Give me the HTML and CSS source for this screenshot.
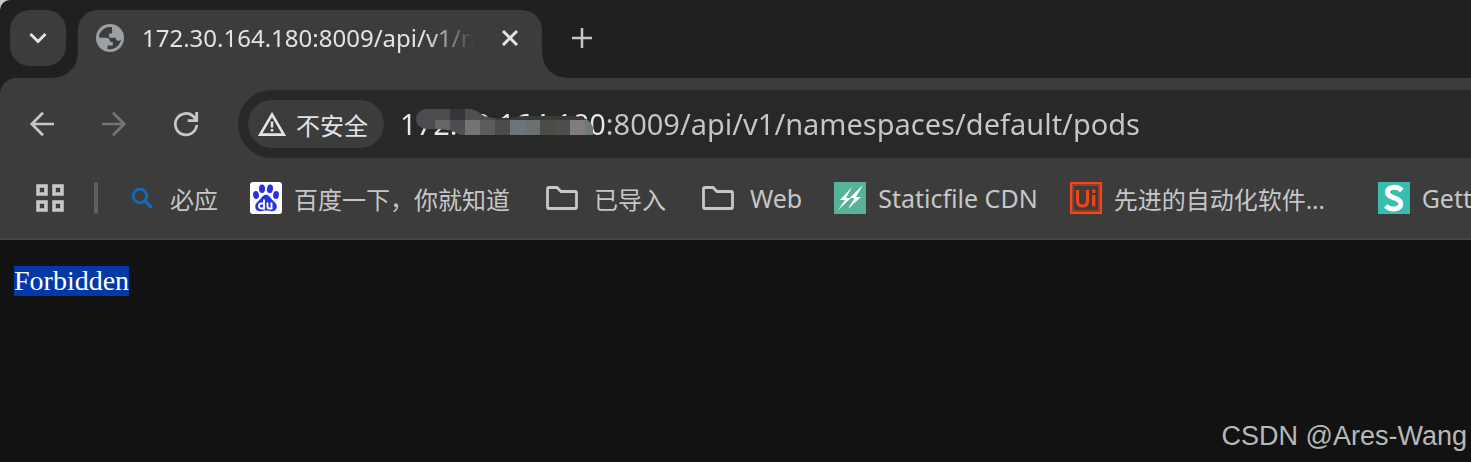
FILE: index.html
```html
<!DOCTYPE html>
<html lang="zh-CN">
<head>
    <title>172.30.164.180:8009/api/v1/namespaces/default/pods</title>
    <meta charset="UTF-8">
    <link rel="stylesheet" href="styles.css">
</head>

<body>

<div class="window">
    <div class="tab-strip">
        <button class="tab-search" type="button" aria-label="搜索标签页">
            <svg width="20" height="14" viewBox="0 0 20 14"><path d="M2.5 3l7.500 7.500L17.500 3" fill="none" stroke="#e3e3e3" stroke-width="3"/></svg>
        </button>
        <div class="tab">
            <svg class="globe" width="28" height="28" viewBox="0 0 28 28">
                <circle cx="14" cy="14" r="14" fill="#9aa0a6"/>
                <path d="M16 3.200C9 2 3 7.500 3 13.500l7 .2c2.500 0 4 1.500 4 4l2.800.2v3.600h-5.300V25c7 1.500 13-4 13.500-9.500-.6 1-1.500 1.300-2.500 1.300-2 0-2.800-1-2.800-3h-6.600V9.500h3V6.200z" fill="#3c3c3c"/>
            </svg>
            <span class="tab-title">172.30.164.180:8009/api/v1/n</span>
            <button class="tab-close" type="button" aria-label="关闭">
                <svg width="18" height="18" viewBox="0 0 18 18"><path d="M2 2l14 14M16 2L2 16" stroke="#e3e3e3" stroke-width="3"/></svg>
            </button>
        </div>
        <button class="new-tab" type="button" aria-label="新标签页">
            <svg width="20" height="20" viewBox="0 0 20 20"><path d="M10 0v20M0 10h20" stroke="#c7c7c7" stroke-width="2.500"/></svg>
        </button>
    </div>

    <div class="toolbar">
        <button class="nav-button" type="button" aria-label="后退">
            <svg width="26" height="26" viewBox="0 0 26 26"><path d="M25 13H3M14 1.800L2.800 13 14 24.200" fill="none" stroke="#c7c7c7" stroke-width="2.700"/></svg>
        </button>
        <button class="nav-button" type="button" aria-label="前进" disabled>
            <svg width="26" height="26" viewBox="0 0 26 26"><path d="M1 13h22M12 1.800L23.200 13 12 24.200" fill="none" stroke="#757575" stroke-width="2.700"/></svg>
        </button>
        <button class="nav-button" type="button" aria-label="重新加载">
            <svg width="26" height="26" viewBox="0 0 26 26"><path d="M23.700 14A10.700 10.700 0 1 1 20.500 5.500L23.500 8.700M23.700 1v8.700h-9" fill="none" stroke="#c7c7c7" stroke-width="2.800"/></svg>
        </button>
        <div class="address-bar">
            <button class="security-chip" type="button">
                <svg width="28" height="24" viewBox="0 0 28 24"><path d="M14 2.500L25.800 22.600H2.200z" fill="none" stroke="#e3e3e3" stroke-width="2.600"/><path d="M14 9.500v6M14 17v2.600" stroke="#e3e3e3" stroke-width="2.500"/></svg>
                <span>不安全</span>
            </button>
            <div class="url-box">
                <input class="url" type="text" aria-label="地址" value="172.30.164.180:8009/api/v1/namespaces/default/pods" spellcheck="false">
                <!-- 遮住 IP 的马赛克 -->
                <svg class="mosaic" width="178" height="28" viewBox="416 108 178 28">
                    <clipPath id="smear"><path d="M426 109H470Q477 110 481 114Q486 118 496 118H511Q516 116 528 116H575Q591 118 593 128V135H461Q451 129 438 129H426Q416 127 416 119Q417 110 426 109z"/></clipPath>
                    <g clip-path="url(#smear)" shape-rendering="crispEdges">
                        <path fill="#4b4c4e" d="M416 108h34v12h-34z"/>
                        <path fill="#353638" d="M450 108h15v12h-15z"/>
                        <path fill="#4e4f4f" d="M465 108h30v12h-30z"/>
                        <path fill="#393939" d="M495 108h99v12h-99z"/>
                        <path fill="#4c4d51" d="M416 120h19v15h-19z"/>
                        <path fill="#686664" d="M435 120h15v15h-15z"/>
                        <path fill="#4c4e53" d="M450 120h15v15h-15z"/>
                        <path fill="#747473" d="M465 120h15v15h-15z"/>
                        <path fill="#5b5d5d" d="M480 120h15v15h-15z"/>
                        <path fill="#4e4a4b" d="M495 120h15v15h-15z"/>
                        <path fill="#6d7579" d="M510 120h15v15h-15z"/>
                        <path fill="#6a7172" d="M525 120h15v15h-15z"/>
                        <path fill="#4e4b44" d="M540 120h15v15h-15z"/>
                        <path fill="#4e4c50" d="M555 120h15v15h-15z"/>
                        <path fill="#827b79" d="M570 120h15v15h-15z"/>
                        <path fill="#707679" d="M585 120h9v15h-9z"/>
                    </g>
                </svg>
            </div>
        </div>
    </div>

    <nav class="bookmarks">
        <button class="apps" type="button" aria-label="应用">
            <svg width="28" height="28" viewBox="0 0 28 28"><path d="M2 2h8v8H2zM18 2h8v8h-8zM2 18h8v8H2zM18 18h8v8h-8z" fill="none" stroke="#c7c7c7" stroke-width="3.600"/></svg>
        </button>
        <span class="divider"></span>
        <a class="bookmark" href="#">
            <svg width="32" height="32" viewBox="0 0 32 32"><circle cx="14" cy="14" r="6.800" fill="none" stroke="#0f6cbd" stroke-width="2.800"/><path d="M18.800 18.800l6 6" stroke="#0f6cbd" stroke-width="3.200" stroke-linecap="round"/></svg>
            <span>必应</span>
        </a>
        <a class="bookmark" href="#">
            <svg width="32" height="32" viewBox="0 0 32 32">
                <rect width="32" height="32" rx="3" fill="#fff"/>
                <g fill="#2932e1">
                    <ellipse cx="12" cy="6.800" rx="3" ry="4.300"/>
                    <ellipse cx="20" cy="6.800" rx="3" ry="4.300" transform="rotate(8 20 6.800)"/>
                    <ellipse cx="6" cy="13" rx="2.900" ry="4" transform="rotate(-10 6 13)"/>
                    <ellipse cx="26" cy="13" rx="2.900" ry="4" transform="rotate(8 26 13)"/>
                    <path d="M16 12.800c3 0 4 2.600 6 4.700 2.400 2.400 4.800 4 4.800 7 0 3-2 4.700-5 4.700-2 0-3.500-.6-5.800-.6s-3.800.6-5.800.6c-3 0-5-1.700-5-4.700 0-3 2.400-4.600 4.800-7 2-2.100 3-4.700 6-4.700z"/>
                </g>
                <g fill="none" stroke="#fff" stroke-width="1.900"><path d="M14 17.500v9h-2.500a2.300 2.300 0 0 1 0-5H14M17.500 20.500v4q0 2 2 2h2v-6"/></g>
            </svg>
            <span>百度一下，你就知道</span>
        </a>
        <a class="bookmark folder" href="#">
            <svg width="32" height="32" viewBox="0 0 32 32"><path d="M3 5.500h8l4 4h14q1.500 0 1.500 1.500v14q0 1.500-1.500 1.500H3q-1.500 0-1.500-1.500V7q0-1.500 1.500-1.500z" fill="none" stroke="#c7c7c7" stroke-width="2.800"/></svg>
            <span>已导入</span>
        </a>
        <a class="bookmark folder latin" href="#">
            <svg width="32" height="32" viewBox="0 0 32 32"><path d="M3 5.500h8l4 4h14q1.500 0 1.500 1.500v14q0 1.500-1.500 1.500H3q-1.500 0-1.500-1.500V7q0-1.500 1.500-1.500z" fill="none" stroke="#c7c7c7" stroke-width="2.800"/></svg>
            <span>Web</span>
        </a>
        <a class="bookmark latin" href="#">
            <svg width="32" height="32" viewBox="0 0 32 32"><rect width="32" height="32" fill="#56b399"/><path d="M18 5L6 18h5L4 28l13-12h-5zM29 3L15.500 16h5L14 27l13-12h-5z" fill="#fff"/></svg>
            <span>Staticfile CDN</span>
        </a>
        <a class="bookmark long" href="#">
            <svg width="32" height="32" viewBox="0 0 32 32"><rect x="1" y="1" width="30" height="30" fill="#3c3c3c" stroke="#fa4616" stroke-width="2.500"/><rect x="3" y="3" width="26" height="26" fill="none" stroke="#963f27" stroke-width="2"/><path d="M7.500 8v10.500q0 5.500 5 5.500t5-5.500V8M23.700 13v11.500M23.700 7.500v3.500" fill="none" stroke="#ef4519" stroke-width="3.200"/></svg>
            <span>先进的自动化软件...</span>
        </a>
        <a class="bookmark latin" href="#">
            <svg width="32" height="32" viewBox="0 0 32 32"><rect width="32" height="32" fill="#38bdb1"/><path d="M23.800 8.500Q20.500 5 15.800 5.300 9.500 5.700 9.500 10.300q0 3.500 6.500 5.500 7 2 6.800 6.200-.3 4.500-6.500 5-5 .3-8.600-3" fill="none" stroke="#fff" stroke-width="5"/></svg>
            <span>Gett</span>
        </a>
    </nav>

    <main class="page">
        <pre class="response"><span class="selected">Forbidden</span></pre>
        <div class="watermark">CSDN @Ares-Wang</div>
    </main>
</div>

</body>
</html>
```
FILE: styles.css
```css
body {
    margin: 0;
    background-color: #c8c8c8;
    font-family: "Noto Sans", "Noto Sans CJK SC", sans-serif;
    color: #c7c7c7;
}

button {
    display: flex;
    align-items: center;
    justify-content: center;
    padding: 0;
    border: none;
    background: none;
    color: inherit;
    font-family: inherit;
    cursor: pointer;
}

svg {
    display: block;
    flex: none;
}

.window {
    display: flex;
    flex-direction: column;
    min-height: 100vh;
    overflow: hidden;
    border-top-left-radius: 10px;
    background-color: #1f2120;
}

/* 标签栏 */
.tab-strip {
    display: flex;
    align-items: flex-start;
    height: 68px;
    padding: 10px 10px 0;
}

.tab-search {
    width: 56px;
    height: 56px;
    margin-right: 12px;
    border-radius: 20px;
    background-color: #3c3c3c;
}

.tab {
    position: relative;
    display: flex;
    align-items: center;
    box-sizing: border-box;
    width: 464px;
    height: 68px;
    padding: 0 20px 12px 18px;
    border-radius: 20px 20px 0 0;
    background-color: #3c3c3c;
}

/* 标签底部的外圆角 */
.tab::before,
.tab::after {
    content: "";
    position: absolute;
    bottom: 0;
    width: 24px;
    height: 24px;
}

.tab::before {
    right: 100%;
    background: radial-gradient(circle at 0 0, transparent 23px, #3c3c3c 24px);
}

.tab::after {
    left: 100%;
    background: radial-gradient(circle at 100% 0, transparent 23px, #3c3c3c 24px);
}

.tab-title {
    flex: 1;
    overflow: hidden;
    margin: 0 24px 0 18px;
    color: #e3e3e3;
    font-size: 24px;
    line-height: 36px;
    white-space: nowrap;
    -webkit-mask-image: linear-gradient(to left, transparent, #000 48px);
    mask-image: linear-gradient(to left, transparent, #000 48px);
}

.tab-close {
    width: 24px;
    height: 36px;
}

.new-tab {
    width: 56px;
    height: 56px;
    margin-left: 12px;
}

/* 工具栏 */
.toolbar {
    display: flex;
    align-items: center;
    padding: 12px 0 12px 6px;
    border-top-left-radius: 16px;
    background-color: #3c3c3c;
}

.nav-button {
    width: 72px;
    height: 56px;
}

.address-bar {
    display: flex;
    flex: 1;
    align-items: center;
    gap: 16px;
    height: 68px;
    margin-left: 16px;
    padding-left: 10px;
    border-radius: 34px 0 0 34px;
    background-color: #282828;
}

.security-chip {
    gap: 10px;
    height: 48px;
    padding: 0 16px 0 10px;
    border-radius: 24px;
    background-color: #3c3c3c;
    color: #e3e3e3;
    font-size: 24px;
}

.url-box {
    position: relative;
    flex: 1;
}

/* 主机部分比路径亮一些 */
.url {
    display: block;
    box-sizing: border-box;
    width: 100%;
    height: 48px;
    padding: 0 0 2px;
    border: none;
    outline: none;
    background: linear-gradient(to right, #e8e8e8 204px, #c7c7c7 204px);
    -webkit-background-clip: text;
    background-clip: text;
    color: transparent;
    font-family: inherit;
    font-size: 29px;
}

.mosaic {
    position: absolute;
    top: 8px;
    left: 16px;
}

/* 书签栏 */
.bookmarks {
    display: flex;
    align-items: center;
    gap: 32px;
    height: 56px;
    padding: 0 0 12px 36px;
    overflow: hidden;
    border-bottom: 2px solid #474747;
    background-color: #3c3c3c;
    font-size: 24px;
}

.apps {
    width: 28px;
    height: 28px;
}

.divider {
    flex: none;
    width: 4px;
    height: 32px;
    margin: 0 -4px 0 -2px;
    border-radius: 2px;
    background-color: #5f5f5f;
}

.bookmark {
    display: flex;
    flex: none;
    align-items: center;
    gap: 12px;
    color: inherit;
    text-decoration: none;
    white-space: nowrap;
}

.folder {
    gap: 16px;
    padding-left: 4px;
}

.latin {
    font-size: 25px;
}

.long {
    width: 276px;
}

/* 页面内容 */
.page {
    position: relative;
    flex: 1;
    padding: 26px 14px;
    background-color: #121212;
}

.response {
    margin: 0;
    color: #fff;
    font-family: "Liberation Serif", serif;
    font-size: 28px;
    line-height: 30px;
}

.selected {
    display: inline-block;
    background-color: #0338a8;
}

.watermark {
    position: absolute;
    right: 4px;
    bottom: 8px;
    color: #b8b8b8;
    font-family: "Liberation Sans", Arial, sans-serif;
    font-size: 27px;
    line-height: 36px;
}
```
